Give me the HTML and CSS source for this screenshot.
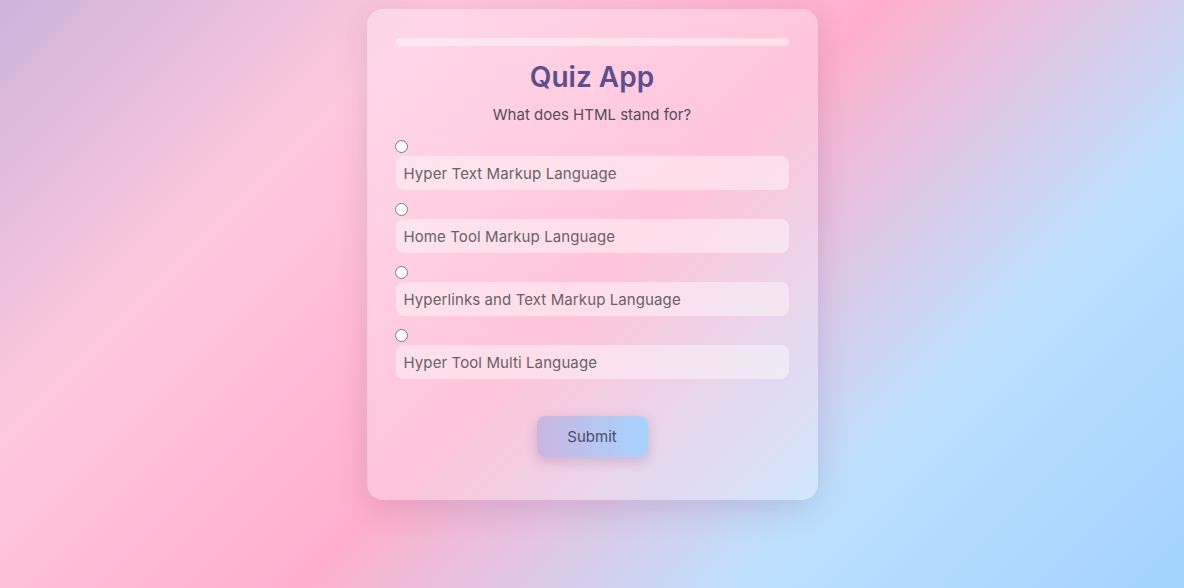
FILE: index.html
```html
<!DOCTYPE html>
<html lang="en">
<head>
<meta charset="UTF-8">
<title>Quiz App</title>
<link rel="stylesheet" href="styles.css">
</head>
<body>
  <main class="card">
    <div class="progress"><div class="progress-fill"></div></div>
    <h1 class="title">Quiz App</h1>
    <p class="question">What does HTML stand for?</p>
    <div class="options">
      <div class="option">
        <input type="radio" name="answer" id="a1" class="radio">
        <label for="a1" class="answer">Hyper Text Markup Language</label>
      </div>
      <div class="option">
        <input type="radio" name="answer" id="a2" class="radio">
        <label for="a2" class="answer">Home Tool Markup Language</label>
      </div>
      <div class="option">
        <input type="radio" name="answer" id="a3" class="radio">
        <label for="a3" class="answer">Hyperlinks and Text Markup Language</label>
      </div>
      <div class="option">
        <input type="radio" name="answer" id="a4" class="radio">
        <label for="a4" class="answer">Hyper Tool Multi Language</label>
      </div>
    </div>
    <div class="actions">
      <button class="submit" type="button">Submit</button>
    </div>
  </main>
</body>
</html>
```
FILE: styles.css
```css
* { box-sizing: border-box; }

html, body { height: 100%; }

body {
  margin: 0;
  padding-top: 9px;
  display: flex;
  justify-content: center;
  align-items: flex-start;
  font-family: "Inter", "DejaVu Sans", sans-serif;
  background: linear-gradient(135deg, #cdb4db 0%, #ffc8dd 25%, #ffafcc 50%, #bde0fe 75%, #a2d2ff 100%);
}

.card {
  width: 451px;
  padding: 29px 29px 43px;
  border-radius: 16px;
  background: rgba(255, 255, 255, 0.28);
  box-shadow: 0 8px 32px rgba(90, 50, 110, 0.16);
  display: flex;
  flex-direction: column;
}

.progress {
  height: 8px;
  border-radius: 4px;
  background: rgba(255, 255, 255, 0.45);
  overflow: hidden;
}

.progress-fill { width: 0; height: 100%; }

.title {
  margin: 13px 0 0;
  text-align: center;
  font-size: 28px;
  line-height: 36px;
  font-weight: 600;
  color: #5c4f8e;
}

.question {
  margin: 10px 0 0;
  text-align: center;
  font-size: 15px;
  line-height: 20px;
  color: #524c5c;
}

.options {
  margin-top: 15px;
  display: flex;
  flex-direction: column;
  gap: 13px;
}

.option {
  display: flex;
  flex-direction: column;
  align-items: flex-start;
  gap: 3px;
}

.radio {
  margin: 0 0 0 -1px;
  width: 13px;
  height: 13px;
}

.answer {
  align-self: stretch;
  height: 34px;
  display: flex;
  align-items: center;
  padding: 0 8px;
  border-radius: 8px;
  background: rgba(255, 255, 255, 0.42);
  font-size: 15px;
  letter-spacing: 0.1px;
  color: #686268;
}

.actions {
  margin-top: 37px;
  display: flex;
  justify-content: center;
}

.submit {
  width: 111px;
  height: 41px;
  border: none;
  border-radius: 8px;
  background: linear-gradient(90deg, #cab6e0, #a6d3ff);
  box-shadow: 0 4px 12px rgba(90, 60, 120, 0.22);
  font-family: inherit;
  font-size: 15px;
  color: #4f4a66;
}
```
